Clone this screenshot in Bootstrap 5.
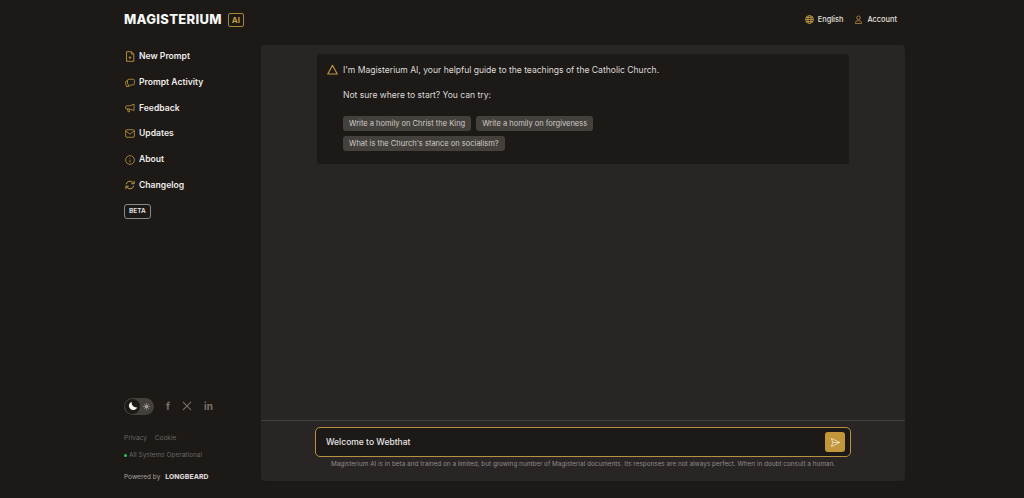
<!DOCTYPE html>
<html lang="en">
<head>
    <meta charset="UTF-8">
    <meta name="viewport" content="width=device-width, initial-scale=1.0">
    <title>Magisterium AI</title>
    <link href="https://cdn.jsdelivr.net/npm/bootstrap@5.3.0/dist/css/bootstrap.min.css" rel="stylesheet">
    <style>
        html, body { height: 100%; }
        body { font-family: Inter, "Liberation Sans", sans-serif; background: #1c1917; color: #e7e5e4; overflow: hidden; }
        svg { display: block; flex-shrink: 0; }
        .shell { width: 781px; height: 498px; margin-left: 124px; }
        .top-bar { height: 45px; padding-bottom: 6px; padding-right: 8px; }
        .logo-text { font-size: 13px; font-weight: 800; letter-spacing: .3px; color: #f5f5f4; }
        .logo-ai { font-size: 8px; font-weight: 700; color: #c2983f; border: 1px solid #a98539; border-radius: 2px; padding: 1px 3px; line-height: 10px; margin-left: 6px; }
        .top-links { gap: 11px; }
        .top-link { font-size: 7.4px; font-weight: 500; color: #e2e0de; gap: 4px; }
        .side { width: 137px; height: 438px; }
        .side-nav { margin-top: -1px; }
        .side-link { font-size: 8.6px; font-weight: 600; color: #eeeceb; height: 25.7px; gap: 4px; padding-left: 1px; }
        .beta-tag { font-size: 6.5px; font-weight: 600; color: #e7e5e4; border: 1px solid #8a8785; border-radius: 3px; padding: 2px 4px; line-height: 9px; margin-top: 6px; }
        .mode-switch { width: 30px; height: 17px; border-radius: 9px; background: #44403c; padding: 0 4px 0 1px; }
        .mode-knob { width: 15px; height: 15px; border-radius: 50%; background: #1c1917; }
        .social-row { gap: 12px; }
        .social-ico { color: #78716c; font-size: 10px; font-weight: 700; line-height: 1; }
        .foot-link { font-size: 6.5px; color: #6b6763; }
        .legal-row { margin-top: 19px; }
        .status-row { gap: 2px; margin-top: 7px; }
        .status-dot { width: 3px; height: 3px; background: #22c55e; border-radius: 50%; }
        .powered { font-size: 6.5px; color: #a8a29e; }
        .powered b { font-size: 6.8px; font-weight: 800; color: #d6d3d1; letter-spacing: .1px; margin-left: 3px; }
        .chat-panel { width: 644px; height: 436px; background: #292524; border-radius: 4px; }
        .chat-scroll { padding: 9px 56px 0; }
        .intro-box { background: #1c1917; border-radius: 3px; padding: 10px; height: 110px; font-size: 8.55px; color: #dedbd9; gap: 5px; }
        .intro-text { line-height: 12px; margin-bottom: 13px; }
        .try-wrap { max-width: 300px; gap: 5px; padding-top: 2px; }
        .try-btn { background: #44403c; color: #cfccc9; font-size: 7.5px; border-radius: 3px; padding: 2px 6px; line-height: 11px; height: 15px; white-space: nowrap; }
        .chat-foot { border-top: 1px solid #44403c; padding: 6px 54px 12px; }
        .prompt-box { height: 30px; background: #1c1917; border: 1.5px solid #b8923f; border-radius: 5px; padding: 0 5px 0 10px; font-size: 8.5px; font-weight: 500; color: #e7e5e4; }
        .send-btn { width: 20px; height: 20px; background: #c2973c; border-radius: 3px; }
        .disclaimer { font-size: 6.4px; color: #8f8b88; text-align: center; margin-top: 3px; line-height: 9px; }
    </style>
</head>
<body>
<div class="shell">
    <header class="top-bar d-flex align-items-center justify-content-between">
        <div class="d-flex align-items-center">
            <span class="logo-text">MAGISTERIUM</span>
            <span class="logo-ai">AI</span>
        </div>
        <div class="top-links d-flex align-items-center">
            <span class="top-link d-flex align-items-center">
                <svg width="9" height="9" viewBox="0 0 16 16" fill="none" stroke="#c2983f" stroke-width="1.6"><circle cx="8" cy="8" r="7"/><ellipse cx="8" cy="8" rx="3" ry="7"/><path d="M1 8h14M2 4.500h12M2 11.500h12"/></svg>
                English
            </span>
            <span class="top-link d-flex align-items-center">
                <svg width="9" height="9" viewBox="0 0 16 16" fill="none" stroke="#a98539" stroke-width="1.6"><circle cx="8" cy="5" r="3.200"/><path d="M2.500 15c0-3.500 2-5 5.500-5s5.500 1.500 5.500 5z"/></svg>
                Account
            </span>
        </div>
    </header>
    <div class="d-flex">
        <aside class="side d-flex flex-column">
            <nav class="side-nav d-flex flex-column">
                <a class="side-link d-flex align-items-center text-decoration-none">
                    <svg width="10" height="11" viewBox="0 0 14 16" fill="none" stroke="#c2983f" stroke-width="1.300" stroke-linejoin="round"><path d="M2 1h7l3.500 3.500V15H2z"/><path d="M9 1v3.500h3.500M7 7.500v4M5 9.500h4"/></svg>
                    New Prompt
                </a>
                <a class="side-link d-flex align-items-center text-decoration-none">
                    <svg width="10" height="10" viewBox="0 0 16 16" fill="none" stroke="#c2983f" stroke-width="1.300" stroke-linejoin="round"><path d="M6 2h7a2 2 0 0 1 2 2v5a2 2 0 0 1-2 2h-4l-3 3v-3a2 2 0 0 1-2-2V4a2 2 0 0 1 2-2z"/><path d="M4 4.500H3a2 2 0 0 0-2 2v4a2 2 0 0 0 2 2v2l2-2"/></svg>
                    Prompt Activity
                </a>
                <a class="side-link d-flex align-items-center text-decoration-none">
                    <svg width="10" height="10" viewBox="0 0 16 16" fill="none" stroke="#c2983f" stroke-width="1.300" stroke-linejoin="round"><path d="M14.500 2v10L7 9.500H2.500A1.500 1.500 0 0 1 1 8V6a1.500 1.500 0 0 1 1.500-1.500H7z"/><path d="M4 9.500l1 4.500h2.500L6.500 9.500"/></svg>
                    Feedback
                </a>
                <a class="side-link d-flex align-items-center text-decoration-none">
                    <svg width="10" height="9" viewBox="0 0 16 14" fill="none" stroke="#c2983f" stroke-width="1.300" stroke-linejoin="round"><rect x="1" y="1" width="14" height="12" rx="2"/><path d="M1.500 3L8 8l6.500-5"/></svg>
                    Updates
                </a>
                <a class="side-link d-flex align-items-center text-decoration-none">
                    <svg width="10" height="10" viewBox="0 0 16 16" fill="none" stroke="#c2983f" stroke-width="1.300"><circle cx="8" cy="8" r="7"/><path d="M8 7.500V12M8 4.500v1.200"/></svg>
                    About
                </a>
                <a class="side-link d-flex align-items-center text-decoration-none">
                    <svg width="10" height="10" viewBox="0 0 16 16" fill="none" stroke="#c2983f" stroke-width="1.600" stroke-linejoin="round"><path d="M2 7a6 6 0 0 1 10.500-3L14.500 6M14.500 1.500V6H10M14 9a6 6 0 0 1-10.500 3L1.500 10M1.500 14.500V10H6"/></svg>
                    Changelog
                </a>
            </nav>
            <div class="d-flex"><span class="beta-tag">BETA</span></div>
            <div class="mt-auto">
                <div class="social-row d-flex align-items-center">
                    <div class="mode-switch d-flex align-items-center justify-content-between">
                        <span class="mode-knob d-flex align-items-center justify-content-center">
                            <svg width="10" height="10" viewBox="0 0 16 16" fill="#f5f5f4"><path d="M6 1a7 7 0 1 0 9 9A7.500 7.500 0 0 1 6 1z"/></svg>
                        </span>
                        <svg width="7" height="7" viewBox="0 0 16 16" fill="#a8a29e" stroke="#a8a29e" stroke-width="1.500"><circle cx="8" cy="8" r="3.500"/><path d="M8 0v3M8 13v3M0 8h3M13 8h3M2.300 2.300l2 2M11.700 11.700l2 2M2.300 13.700l2-2M11.700 4.300l2-2"/></svg>
                    </div>
                    <span class="social-ico">f</span>
                    <svg width="10" height="10" viewBox="0 0 16 16" fill="none" stroke="#78716c" stroke-width="1.800"><path d="M1.500 1.500l13 13M14.500 1.500l-13 13"/></svg>
                    <span class="social-ico">in</span>
                </div>
                <div class="legal-row d-flex gap-2 foot-link"><span>Privacy</span><span>Cookie</span></div>
                <div class="status-row d-flex align-items-center foot-link"><span class="status-dot"></span>All Systems Operational</div>
                <div class="powered mt-2 pt-1">Powered by <b>LONGBEARD</b></div>
            </div>
        </aside>
        <main class="chat-panel d-flex flex-column">
            <div class="chat-scroll flex-grow-1">
                <div class="intro-box d-flex">
                    <svg width="11" height="11" viewBox="0 0 16 16" fill="none" stroke="#c2983f" stroke-width="1.500" stroke-linejoin="round"><path d="M8 2L15 14.500H1z"/></svg>
                    <div>
                        <p class="intro-text">I'm Magisterium AI, your helpful guide to the teachings of the Catholic Church.</p>
                        <p class="intro-text">Not sure where to start? You can try:</p>
                        <div class="try-wrap d-flex flex-wrap">
                            <span class="try-btn">Write a homily on Christ the King</span>
                            <span class="try-btn">Write a homily on forgiveness</span>
                            <span class="try-btn">What is the Church's stance on socialism?</span>
                        </div>
                    </div>
                </div>
            </div>
            <div class="chat-foot">
                <div class="prompt-box d-flex align-items-center justify-content-between">
                    <span>Welcome to Webthat</span>
                    <span class="send-btn d-flex align-items-center justify-content-center">
                        <svg width="11" height="11" viewBox="0 0 16 16" fill="none" stroke="#f5ecd6" stroke-width="1.100" stroke-linejoin="round"><path d="M2 2l12 6-12 6 2-6zM4 8h10"/></svg>
                    </span>
                </div>
                <p class="disclaimer mb-0">Magisterium AI is in beta and trained on a limited, but growing number of Magisterial documents. Its responses are not always perfect. When in doubt consult a human.</p>
            </div>
        </main>
    </div>
</div>
<script src="https://cdn.jsdelivr.net/npm/bootstrap@5.3.0/dist/js/bootstrap.bundle.min.js"></script>
</body>
</html>
